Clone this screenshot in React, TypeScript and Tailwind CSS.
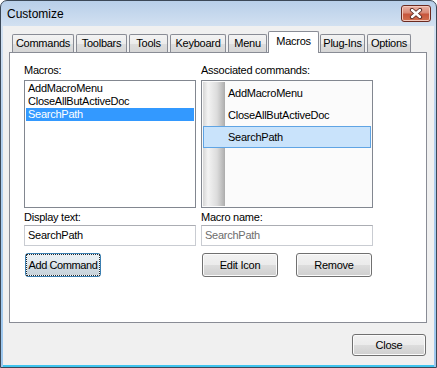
import React from 'react';

const tabs = [
  { label: 'Commands', cls: 'w-[62px]' },
  { label: 'Toolbars', cls: 'w-[51px] ml-[2px]' },
  { label: 'Tools', cls: 'w-[39px] ml-[2px]' },
  { label: 'Keyboard', cls: 'w-[56px] ml-[2px]' },
  { label: 'Menu', cls: 'w-[39px] ml-[2px]' },
  { label: 'Macros', cls: 'w-[51px] ml-[1px]', active: true },
  { label: 'Plug-Ins', cls: 'w-[45px] ml-[1px]' },
  { label: 'Options', cls: 'w-[44px] ml-[2px]' },
];

const macros = ['AddMacroMenu', 'CloseAllButActiveDoc', 'SearchPath'];

const btn =
  'h-[24px] w-[76px] rounded-[3px] border border-[#707070] bg-[linear-gradient(#f2f2f2_0%,#ebebeb_50%,#dddddd_50%,#cfcfcf_100%)] shadow-[inset_0_0_0_1px_#fbfbfb] text-[11px] text-black flex items-center justify-center';

const App: React.FC = () => {
  return (
    <div className="w-[437px] h-[368px] flex flex-col border border-[#3b4857] rounded-t-[7px] overflow-hidden bg-[linear-gradient(#b8cfe9_0px,#d3e1f1_26px,#b4d0ee_120px,#9cc7ee_100%)] font-['Liberation_Sans',Arial,sans-serif] tracking-[-0.25px] text-black select-none">
      {/* title bar */}
      <div className="h-[25px] flex items-start justify-between">
        <span className="ml-[6px] mt-[6px] text-[12px] leading-[15px] tracking-normal">Customize</span>
        <div className="mt-[4px] mr-[5px] w-[30px] h-[17px] rounded-[3px] border border-[#6b2a20] bg-[linear-gradient(#eab3a6_0%,#d98a77_45%,#c7563d_55%,#d1704f_100%)] shadow-[inset_0_0_0_1px_#f3c9bd] flex items-center justify-center">
          <svg width="14" height="11" viewBox="0 0 14 11">
            <path d="M3 2 L11 9 M11 2 L3 9" stroke="#5a2a22" strokeWidth="4.2" strokeLinecap="round" />
            <path d="M3 2 L11 9 M11 2 L3 9" stroke="#ffffff" strokeWidth="2.4" strokeLinecap="round" />
          </svg>
        </div>
      </div>

      {/* client area */}
      <div className="flex-1 mx-[2px] mb-[2px] bg-[#f0f0f0] pl-[6px] pt-[5px] flex flex-col shadow-[0_2px_0_#3fc4ee]">
        <div className="relative z-10 h-[21px] flex items-end pl-[3px]">
          {tabs.map((t) =>
            t.active ? (
              <div
                key={t.label}
                className={`${t.cls} h-[22px] -mb-px bg-white border border-b-0 border-[#898c95] rounded-t-[2px] flex items-center justify-center text-[11px] pb-[2px]`}
              >
                {t.label}
              </div>
            ) : (
              <div
                key={t.label}
                className={`${t.cls} h-[18px] border border-b-0 border-[#898c95] rounded-t-[2px] bg-[linear-gradient(#f3f3f3,#ebebeb_50%,#dddddd_51%,#d6d6d6)] flex items-center justify-center text-[11px]`}
              >
                {t.label}
              </div>
            )
          )}
        </div>

        <div className="w-[418px] h-[271px] bg-white border border-[#898c95] pt-[11px] px-[14px]">
          <div className="grid grid-cols-[172px_172px] gap-x-[5px]">
            {/* left column */}
            <div className="flex flex-col">
              <div className="text-[11px] leading-[13px] h-[13px]">Macros:</div>
              <div className="mt-[3px] h-[128px] border border-[#828790] bg-white p-[1px]">
                {macros.map((m, i) => (
                  <div
                    key={m}
                    className={`h-[13px] leading-[13px] text-[11px] pl-[2px] ${
                      i === 2 ? 'bg-[#3399ff] text-white' : ''
                    }`}
                  >
                    {m}
                  </div>
                ))}
              </div>
              <div className="mt-[3px] text-[11px] leading-[13px] h-[13px]">Display text:</div>
              <div className="mt-[1px] h-[21px] border border-[#c9ccd2] border-t-[#abadb3] bg-white pl-[3px] flex items-center text-[11px]">
                SearchPath
              </div>
              <div className="mt-[7px] pl-[1px]">
                <div className="h-[24px] w-[76px] rounded-[3px] border border-[#3c7fb1] bg-[linear-gradient(#eaf0f4_0%,#e2e9ee_50%,#d3dde4_50%,#c8d3db_100%)] shadow-[inset_0_0_0_1px_#f4fafd] flex items-center justify-center">
                  <span className="h-[20px] w-[72px] outline outline-1 outline-dotted outline-[#2a2a2a] flex items-center justify-center text-[11px] tracking-[-0.4px]">
                    Add Command
                  </span>
                </div>
              </div>
            </div>

            {/* right column */}
            <div className="flex flex-col">
              <div className="text-[11px] leading-[13px] h-[13px]">Associated commands:</div>
              <div className="mt-[3px] h-[128px] border border-[#828790] bg-[#fbfbfb] p-[1px]">
                <div className="h-full bg-[linear-gradient(90deg,#d6d6d6_0px,#f3f3f3_5px,#dcdcdc_14px,#b3b3b3_21px,#a9a9a9_22px,#fbfbfb_22px)]">
                  {macros.map((m, i) => (
                    <div
                      key={m}
                      className={`h-[22px] border flex items-center pl-[24px] text-[11px] ${
                        i === 2 ? 'bg-[#c9e3fb] border-[#5fa4e4]' : 'border-transparent'
                      }`}
                    >
                      {m}
                    </div>
                  ))}
                </div>
              </div>
              <div className="mt-[3px] text-[11px] leading-[13px] h-[13px]">Macro name:</div>
              <div className="mt-[1px] h-[21px] border border-[#c9ccd2] border-t-[#abadb3] bg-white pl-[3px] flex items-center text-[11px] text-[#6d6d6d]">
                SearchPath
              </div>
              <div className="mt-[7px] flex justify-between px-[1px]">
                <div className={btn}>Edit Icon</div>
                <div className={btn}>Remove</div>
              </div>
            </div>
          </div>
        </div>

        <div className="w-[418px] mt-[11px] flex justify-end pr-[1px]">
          <div className="h-[22px] w-[74px] rounded-[3px] border border-[#707070] bg-[linear-gradient(#f2f2f2_0%,#ebebeb_50%,#dddddd_50%,#cfcfcf_100%)] shadow-[inset_0_0_0_1px_#fbfbfb] text-[11px] flex items-center justify-center">
            Close
          </div>
        </div>
      </div>
    </div>
  );
};

export default App;
